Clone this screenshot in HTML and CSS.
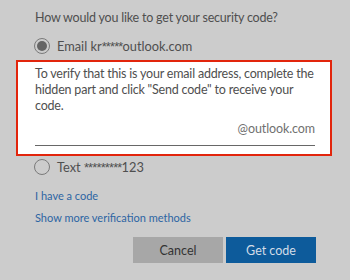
FILE: index.html
```html
<!DOCTYPE html>
<html>
<head>
<meta charset="utf-8">
<link rel="stylesheet" href="styles.css">
</head>
<body>
<div class="dialog">
  <div class="title">How would you like to get your security code?</div>
  <div class="option option-email">
    <span class="radio checked"></span>
    <span class="label">Email kr<span class="mask">*****</span>outlook.com</span>
  </div>
  <div class="verify-box">
    <p class="verify-text">To verify that this is your email address, complete the hidden part and click "Send code" to receive your code.</p>
    <div class="field">
      <span class="suffix">@outlook.com</span>
    </div>
  </div>
  <div class="option option-text">
    <span class="radio"></span>
    <span class="label">Text <span class="mask">*********</span>123</span>
  </div>
  <div class="links">
    <a class="link">I have a code</a>
    <a class="link">Show more verification methods</a>
  </div>
  <div class="buttons">
    <button class="btn btn-cancel">Cancel</button>
    <button class="btn btn-primary">Get code</button>
  </div>
</div>
</body>
</html>
```
FILE: styles.css
```css
html, body {
  margin: 0;
  padding: 0;
  background: #cccccc;
}
body {
  font-family: Lato, "Noto Sans", sans-serif;
  color: #4f4f4f;
  width: 350px;
  height: 280px;
  overflow: hidden;
}
.dialog {
  padding: 10px 18px 0 16px;
  display: flex;
  flex-direction: column;
}
.title {
  font-size: 12.5px;
  letter-spacing: -0.2px;
  line-height: 16px;
  padding-left: 19px;
}
.option {
  display: flex;
  align-items: center;
  gap: 7px;
  padding-left: 18px;
  font-size: 12.8px;
  height: 20px;
}
.mask {
  font-family: "Liberation Sans", sans-serif;
  letter-spacing: -0.8px;
}
.option-email {
  margin-top: 10px;
}
.radio {
  box-sizing: border-box;
  width: 16px;
  height: 16px;
  border-radius: 50%;
  border: 1px solid #7a7a7a;
  display: flex;
  align-items: center;
  justify-content: center;
  flex: none;
}
.radio.checked::after {
  content: "";
  width: 10px;
  height: 10px;
  border-radius: 50%;
  background: #656565;
}
.verify-box {
  margin-top: 4px;
  background: #ffffff;
  border: 2px solid #e2250c;
  padding: 4px 15px 8px 17px;
}
.verify-text {
  margin: 0;
  font-size: 12.5px;
  letter-spacing: -0.2px;
  line-height: 16px;
}
.field {
  margin-top: 7px;
  padding-bottom: 8px;
  border-bottom: 1px solid #676767;
  text-align: right;
  font-size: 12.5px;
  letter-spacing: -0.1px;
  line-height: 16px;
  color: #707070;
}
.option-text {
  margin-top: 1px;
}
.links {
  display: flex;
  flex-direction: column;
  padding-left: 19px;
  margin-top: 8px;
}
.link {
  font-size: 11px;
  line-height: 22px;
  color: #2c65a3;
}
.buttons {
  display: flex;
  justify-content: flex-end;
  gap: 3px;
  margin-top: 8px;
  padding-right: 16px;
}
.btn {
  width: 90px;
  height: 26px;
  border: none;
  font-family: inherit;
  font-size: 12.5px;
  padding: 0;
}
.btn-cancel {
  background: #a7a7a7;
  color: #333333;
}
.btn-primary {
  background: #0d5b9b;
  color: #d3dde8;
}
```
